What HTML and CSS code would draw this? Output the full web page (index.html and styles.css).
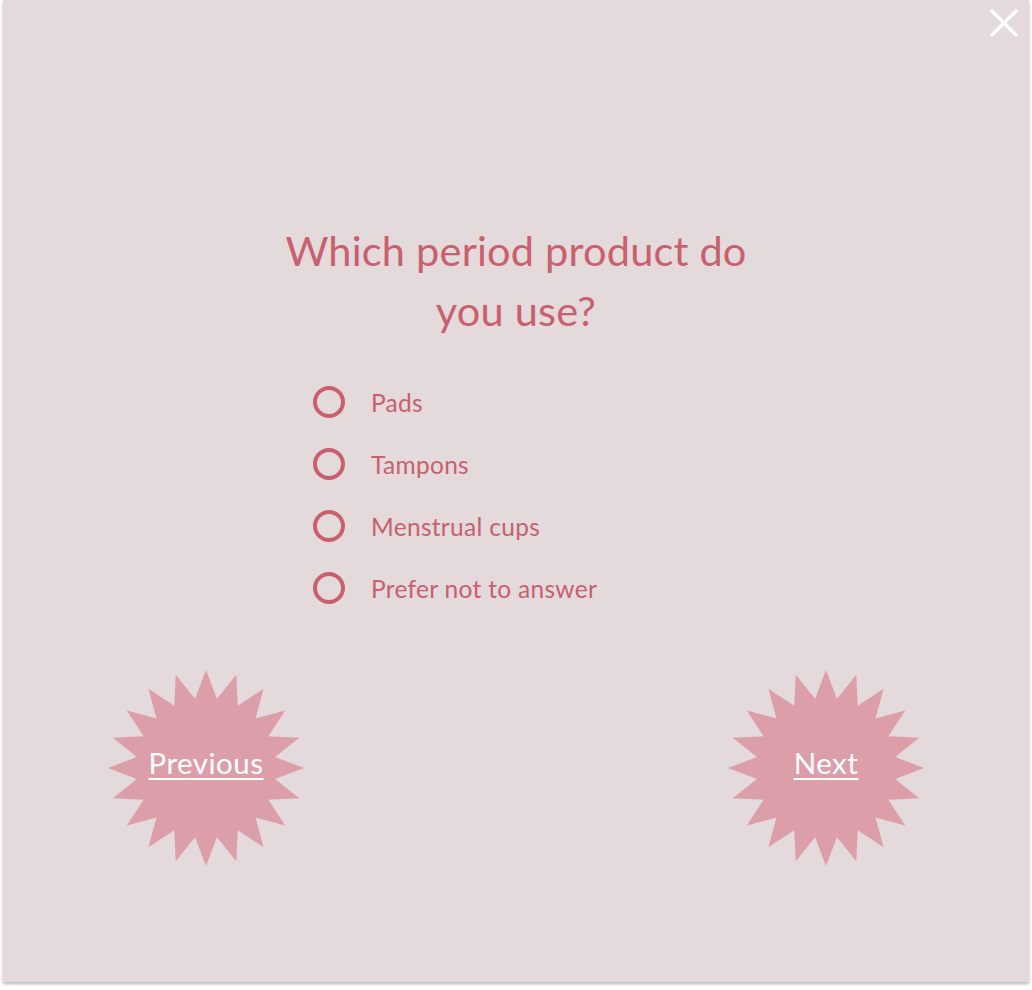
FILE: index.html
```html
<!DOCTYPE html>
<html lang="en">
<head>
<meta charset="utf-8">
<title>Quiz</title>
<link rel="stylesheet" href="styles.css">
</head>
<body>
<div class="panel">
  <div class="topbar">
    <button class="close" aria-label="Close">
      <svg width="30" height="30" viewBox="0 0 30 30"><path d="M2 2 L28 28 M28 2 L2 28" stroke="#ffffff" stroke-width="3.6" stroke-linecap="butt"/></svg>
    </button>
  </div>
  <h1 class="title">Which period product do you use?</h1>
  <ul class="options">
    <li class="option"><span class="radio"></span><span class="label">Pads</span></li>
    <li class="option"><span class="radio"></span><span class="label">Tampons</span></li>
    <li class="option"><span class="radio"></span><span class="label">Menstrual cups</span></li>
    <li class="option"><span class="radio"></span><span class="label">Prefer not to answer</span></li>
  </ul>
  <div class="nav">
    <a class="burst" href="#">
      <svg class="burst-shape" viewBox="0 0 200 200" width="200" height="200"><polygon fill="#dc9faa" points="100,2 110.95,30.86 130.28,6.8 131.78,37.63 157.6,20.72 149.5,50.5 179.28,42.4 162.37,68.22 193.2,69.72 169.14,89.05 198,100 169.14,110.95 193.2,130.28 162.37,131.78 179.28,157.6 149.5,149.5 157.6,179.28 131.78,162.37 130.28,193.2 110.95,169.14 100,198 89.05,169.14 69.72,193.2 68.22,162.37 42.4,179.28 50.5,149.5 20.72,157.6 37.63,131.78 6.8,130.28 30.86,110.95 2,100 30.86,89.05 6.8,69.72 37.63,68.22 20.72,42.4 50.5,50.5 42.4,20.72 68.22,37.63 69.72,6.8 89.05,30.86"/></svg>
      <span class="burst-text">Previous</span>
    </a>
    <a class="burst" href="#">
      <svg class="burst-shape" viewBox="0 0 200 200" width="200" height="200"><polygon fill="#dc9faa" points="100,2 110.95,30.86 130.28,6.8 131.78,37.63 157.6,20.72 149.5,50.5 179.28,42.4 162.37,68.22 193.2,69.72 169.14,89.05 198,100 169.14,110.95 193.2,130.28 162.37,131.78 179.28,157.6 149.5,149.5 157.6,179.28 131.78,162.37 130.28,193.2 110.95,169.14 100,198 89.05,169.14 69.72,193.2 68.22,162.37 42.4,179.28 50.5,149.5 20.72,157.6 37.63,131.78 6.8,130.28 30.86,110.95 2,100 30.86,89.05 6.8,69.72 37.63,68.22 20.72,42.4 50.5,50.5 42.4,20.72 68.22,37.63 69.72,6.8 89.05,30.86"/></svg>
      <span class="burst-text">Next</span>
    </a>
  </div>
</div>
</body>
</html>
```
FILE: styles.css
```css
html, body {
  margin: 0;
  padding: 0;
  background: #ffffff;
}
body {
  font-family: "Lato", "Open Sans", sans-serif;
  min-height: 990px;
}
.panel {
  margin: 0 3px;
  height: 982px;
  background: #e4d9db;
  box-shadow: 0 2px 3px rgba(0, 0, 0, 0.28);
  display: flex;
  flex-direction: column;
  box-sizing: border-box;
}
.topbar {
  display: flex;
  justify-content: flex-end;
  padding: 8px 10px 0 0;
  height: 30px;
}
.close {
  background: none;
  border: 0;
  padding: 0;
  width: 30px;
  height: 30px;
  cursor: pointer;
}
.close svg {
  display: block;
}
.title {
  margin: 182px auto 0;
  width: 500px;
  text-align: center;
  font-weight: 400;
  font-size: 41.5px;
  line-height: 60px;
  color: #c8606e;
  letter-spacing: 0.2px;
}
.options {
  list-style: none;
  margin: 31px auto 0;
  padding: 0;
  width: 406px;
}
.option {
  display: flex;
  align-items: center;
  height: 62px;
}
.radio {
  width: 32px;
  height: 32px;
  box-sizing: border-box;
  border: 4.5px solid #c8606e;
  border-radius: 50%;
  flex: none;
}
.label {
  margin-left: 26px;
  font-size: 24.5px;
  color: #c8606e;
  letter-spacing: 0.3px;
}
.nav {
  display: flex;
  justify-content: space-between;
  margin-top: 49px;
  padding: 0 103px 0 103px;
}
.burst {
  display: grid;
  width: 200px;
  height: 200px;
  color: #ffffff;
  text-decoration: none;
}
.burst-shape,
.burst-text {
  grid-area: 1 / 1;
}
.burst-shape {
  display: block;
}
.burst-text {
  align-self: center;
  justify-self: center;
  font-size: 29.5px;
  text-decoration: underline;
  text-decoration-thickness: 2px;
  text-underline-offset: 4px;
  padding-bottom: 12px;
  letter-spacing: 0.5px;
}
```
